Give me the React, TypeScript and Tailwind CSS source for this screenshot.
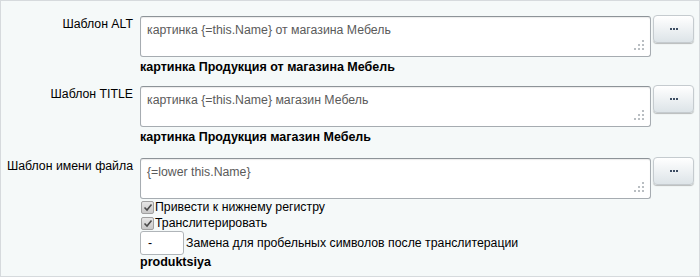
import React from 'react';

const font = { fontFamily: '"Liberation Sans", Arial, sans-serif' };

function Grip() {
  // little triangle of dots in the textarea corner
  const dots = [
    [8, 0],
    [4, 4], [8, 4],
    [0, 8], [4, 8], [8, 8],
  ];
  return (
    <svg className="absolute right-[6px] bottom-[6px]" width="10" height="10" viewBox="0 0 10 10">
      {dots.map(([x, y], i) => (
        <rect key={i} x={x} y={y} width="2" height="2" fill="#b9bec2" />
      ))}
    </svg>
  );
}

function DotsButton() {
  return (
    <button className="ml-[2px] mt-[-1px] w-[41px] h-[28px] rounded-[4px] border border-[#c5cbcf] bg-gradient-to-b from-white to-[#dde4e8] shadow-[0_1px_1px_rgba(0,0,0,0.25)] flex items-center justify-center">
      <span className="flex gap-[1px]">
        <span className="w-[2px] h-[2px] bg-[#3d4d63]" />
        <span className="w-[2px] h-[2px] bg-[#3d4d63]" />
        <span className="w-[2px] h-[2px] bg-[#3d4d63]" />
      </span>
    </button>
  );
}

function Template({ value }: { value: string }) {
  return (
    <div className="flex items-start">
      <div className="relative w-[511px] h-[41px] rounded-[3px] border border-[#a6acb1] border-t-[#8d9398] bg-white shadow-[inset_0_1px_1px_rgba(0,0,0,0.08)]">
        <div className="px-[6px] pt-[6px] text-[12.3px] leading-[15px] text-[#5a5a5a]">{value}</div>
        <Grip />
      </div>
      <DotsButton />
    </div>
  );
}

function Check({ label }: { label: string }) {
  return (
    <div className="flex items-center h-[16px]">
      <span className="w-[13px] h-[13px] ml-[1px] rounded-[2px] border border-[#a0a0a0] bg-gradient-to-b from-[#e6e6e6] to-[#c8c8c8] flex items-center justify-center">
        <svg width="10" height="9" viewBox="0 0 10 9">
          <path d="M1.5 4.5 L4 7 L8.5 1.5" stroke="#4a4a4a" strokeWidth="1.6" fill="none" />
        </svg>
      </span>
      <span className="ml-[1px] text-[12.3px] text-black">{label}</span>
    </div>
  );
}

function Row({ label, children }: { label: string; children: React.ReactNode }) {
  return (
    <div className="flex">
      <div className="w-[133px] pr-[1px] whitespace-nowrap text-right text-[12.3px] leading-[15px] text-black pt-[1px]">{label}</div>
      <div className="ml-[6px]">{children}</div>
    </div>
  );
}

export default function App() {
  return (
    <div style={font} className="w-[700px] h-[277px] border border-[#d6dadd] bg-[#f5f9f9] pt-[15px]">
      <Row label="Шаблон ALT">
        <Template value="картинка {=this.Name} от магазина Мебель" />
        <div className="mt-[3px] text-[12.5px] leading-[15px] font-bold text-black">картинка Продукция от магазина Мебель</div>
      </Row>
      <div className="h-[11px]" />
      <Row label="Шаблон TITLE">
        <Template value="картинка {=this.Name} магазин Мебель" />
        <div className="mt-[3px] text-[12.5px] leading-[15px] font-bold text-black">картинка Продукция магазин Мебель</div>
      </Row>
      <div className="h-[13px]" />
      <Row label="Шаблон имени файла">
        <Template value="{=lower this.Name}" />
        <div>
          <Check label="Привести к нижнему регистру" />
          <Check label="Транслитерировать" />
        </div>
        <div className="flex items-center">
          <div className="w-[44px] h-[24px] rounded-[3px] border border-[#b0b5b9] bg-white text-[12.3px] pl-[7px] leading-[22px] text-black">-</div>
          <span className="ml-[2px] text-[12.3px] text-black">Замена для пробельных символов после транслитерации</span>
        </div>
        <div className="mt-0 text-[12.5px] leading-[15px] font-bold text-black">produktsiya</div>
      </Row>
    </div>
  );
}
